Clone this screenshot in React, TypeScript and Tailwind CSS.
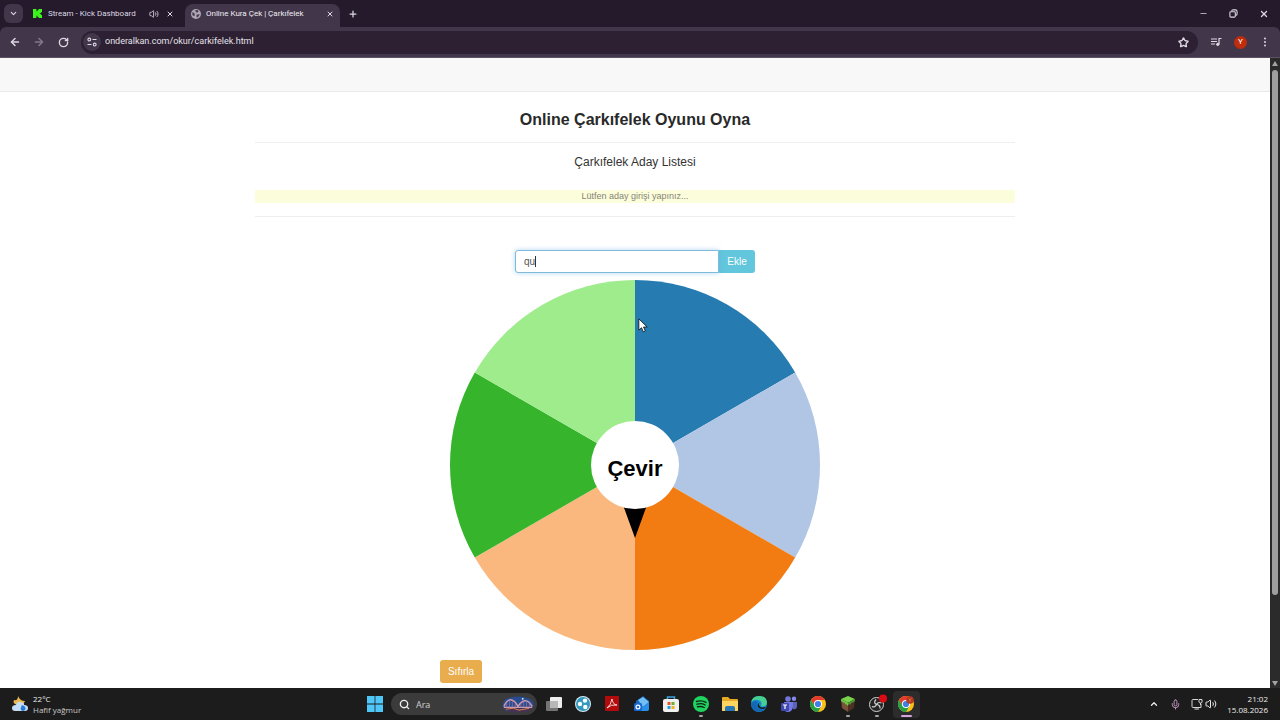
import { useState } from "react";
import type { ReactNode } from "react";
import { ArrowLeft, ArrowRight, ChevronDown, ChevronUp, Mic, Minus, Plus, RotateCw, Search, Star, Volume2, X } from "lucide-react";

const SLICES = [
  { name: "blue", color: "#267cb0" },
  { name: "light-blue", color: "#b0c6e4" },
  { name: "orange", color: "#f27c12" },
  { name: "peach", color: "#fab87e" },
  { name: "green", color: "#35b42c" },
  { name: "light-green", color: "#9fec8d" },
];

function slicePath(index: number, count: number, radius: number) {
  const point = (step: number) => {
    const angle = (step / count) * Math.PI * 2;
    return `${radius + Math.sin(angle) * radius} ${radius - Math.cos(angle) * radius}`;
  };
  return `M${radius} ${radius}L${point(index)}A${radius} ${radius} 0 0 1 ${point(index + 1)}Z`;
}

function Wheel() {
  return (
    <div className="relative mx-auto mt-[7px] size-[370px]">
      <svg viewBox="0 0 370 370" className="block size-full" aria-hidden="true">
        {SLICES.map((slice, index) => (
          <path key={slice.name} d={slicePath(index, SLICES.length, 185)} fill={slice.color} />
        ))}
        <path d="M173 225H197L185 258Z" fill="#000" />
      </svg>
      <button
        type="button"
        className="absolute inset-0 m-auto size-[88px] rounded-full bg-white pt-2 text-[22px] leading-6 font-bold text-black"
      >
        Çevir
      </button>
      <svg viewBox="0 0 12 18" className="pointer-events-none absolute top-[38px] left-[188px] h-[15px] w-[10px]" aria-hidden="true">
        <path d="M1 1V14.5L4.2 11.7L6.4 16.7L8.8 15.6L6.6 10.8H11Z" fill="#fff" stroke="#111" strokeWidth="1" />
      </svg>
    </div>
  );
}

function CandidateForm() {
  const [name, setName] = useState("qu");

  return (
    <form className="mx-auto mt-[33px] flex h-[23px] w-[240px]" onSubmit={(event) => event.preventDefault()}>
      <div className="relative flex min-w-0 flex-1">
        <input
          type="text"
          aria-label="Aday"
          value={name}
          onChange={(event) => setName(event.target.value)}
          className="min-w-0 flex-1 rounded-l-[3px] border border-[#7fbbd8] bg-white px-2 text-[10px] text-[#555] shadow-[0_0_5px_rgba(102,175,233,0.5)] outline-none"
        />
        <span className="pointer-events-none absolute top-[6px] left-5 h-[11px] w-px bg-[#333]" />
      </div>
      <button type="submit" className="w-9 rounded-r-[3px] bg-[#62c6dc] text-[10px] text-white">
        Ekle
      </button>
    </form>
  );
}

function KickLogo() {
  return (
    <svg viewBox="0 0 9 9" className="size-[9px] shrink-0" aria-hidden="true">
      <path d="M0 0H3.4V2.2H4.5V1.1H5.6V0H9V3.2H7.9V4.2H6.8V4.9H7.9V5.9H9V9H5.6V7.9H4.5V6.8H3.4V9H0Z" fill="#3bf51c" />
    </svg>
  );
}

function GlobeIcon() {
  return (
    <svg viewBox="0 0 16 16" className="size-[10px] shrink-0" aria-hidden="true">
      <circle cx="8" cy="8" r="8" fill="#aca5b3" />
      <path d="M2 5Q5 5 6 7.5T4.5 11.5Q1 9 2 5ZM7 1.5H11L12 4L9.5 6L7.5 4.5ZM9 9L13.5 8Q14 11 10.5 13.5L8.5 12Z" fill="#4b3f50" />
    </svg>
  );
}

function BrowserTabs() {
  return (
    <div className="flex h-[27px] items-center bg-[#241a2c] pl-1 text-[#ddd8e2]">
      <button type="button" aria-label="Search tabs" className="flex size-[19px] items-center justify-center rounded-md bg-[#42364a]">
        <ChevronDown size={9} strokeWidth={3} />
      </button>
      <div className="ml-[10px] flex h-full w-[141px] items-center text-[8px]">
        <KickLogo />
        <span className="ml-[6px] whitespace-nowrap">Stream - Kick Dashboard</span>
        <Volume2 size={10} className="ml-auto" />
        <button type="button" aria-label="Close Stream - Kick Dashboard" className="ml-[7px]">
          <X size={8} strokeWidth={3} />
        </button>
      </div>
      <div className="ml-[11px] flex h-[23px] w-[155px] items-center self-end rounded-t-lg bg-[#42364a] px-[6px] pb-1 text-[8px]">
        <GlobeIcon />
        <span className="ml-[5px] whitespace-nowrap text-[#f0edf2]">Online Kura Çek | Çarkıfelek</span>
        <button type="button" aria-label="Close Online Kura Çek" className="ml-auto">
          <X size={8} strokeWidth={3} />
        </button>
      </div>
      <button type="button" aria-label="New tab" className="ml-2">
        <Plus size={10} strokeWidth={3} />
      </button>
      <div className="mr-[11px] ml-auto flex items-center gap-[21px]">
        <button type="button" aria-label="Minimize">
          <Minus size={9} strokeWidth={2} />
        </button>
        <button type="button" aria-label="Restore">
          <svg viewBox="0 0 10 10" className="size-[9px]" fill="none" stroke="currentColor" strokeWidth="1.2" aria-hidden="true">
            <rect x="1" y="3" width="6" height="6" rx="1" />
            <path d="M3 2.5Q3 1 4.5 1H7Q9 1 9 3V5.5Q9 7 7.5 7" />
          </svg>
        </button>
        <button type="button" aria-label="Close window">
          <X size={10} strokeWidth={3} />
        </button>
      </div>
    </div>
  );
}

function Toolbar() {
  const [url, setUrl] = useState("onderalkan.com/okur/carkifelek.html");

  return (
    <div className="flex h-[31px] items-center rounded-t-md border-b border-[#5b5162] bg-[#42364a] pr-[11px] pl-[9px] text-[#ddd8e2]">
      <button type="button" aria-label="Back">
        <ArrowLeft size={12} strokeWidth={3} />
      </button>
      <button type="button" aria-label="Forward" className="ml-3 text-[#84798b]">
        <ArrowRight size={12} strokeWidth={3} />
      </button>
      <button type="button" aria-label="Reload" className="ml-[13px]">
        <RotateCw size={11} strokeWidth={3} />
      </button>
      <div className="ml-3 flex h-[23px] flex-1 items-center rounded-full bg-[#2c2032] px-[2px]">
        <button type="button" aria-label="Site information" className="flex size-[18px] items-center justify-center rounded-full bg-[#42364a]">
          <svg viewBox="0 0 10 10" className="size-[10px]" fill="none" stroke="currentColor" strokeWidth="1.1" aria-hidden="true">
            <circle cx="2.3" cy="2.5" r="1.4" />
            <circle cx="7.7" cy="7.5" r="1.4" />
            <path d="M5.5 2.5H9.5M0.5 7.5H4.5" />
          </svg>
        </button>
        <input
          type="text"
          aria-label="Address"
          value={url}
          onChange={(event) => setUrl(event.target.value)}
          className="ml-1 min-w-0 flex-1 bg-transparent text-[9px] text-[#e6e1e9] outline-none"
        />
        <button type="button" aria-label="Bookmark" className="mr-[7px]">
          <Star size={11} strokeWidth={3} />
        </button>
      </div>
      <button type="button" aria-label="Media controls" className="ml-3">
        <svg viewBox="0 0 12 10" className="h-[10px] w-3" aria-hidden="true">
          <path d="M1 2H7M1 4.5H7M1 7H5M9 7V1.5H11.5" fill="none" stroke="currentColor" strokeWidth="1.2" />
          <circle cx="7.8" cy="7.3" r="1.6" fill="currentColor" />
        </svg>
      </button>
      <button type="button" aria-label="Profile" className="ml-3 size-[13px] rounded-full bg-[#bf2d0d] text-[8px] leading-3 text-white">
        Y
      </button>
      <button type="button" aria-label="Menu" className="ml-[14px]">
        <svg viewBox="0 0 8 10" className="h-[10px] w-2" fill="currentColor" aria-hidden="true">
          <circle cx="4" cy="1.4" r="1" />
          <circle cx="4" cy="5" r="1" />
          <circle cx="4" cy="8.6" r="1" />
        </svg>
      </button>
    </div>
  );
}

function Scrollbar() {
  return (
    <div className="flex w-[10px] shrink-0 flex-col items-center bg-[#2b2b2b] pt-[3px] pb-[2px]">
      <svg viewBox="0 0 6 5" className="h-[5px] w-[6px] shrink-0" aria-hidden="true">
        <path d="M3 0L6 5H0Z" fill="#a3a3a3" />
      </svg>
      <div className="mt-1 h-[84%] w-[6px] rounded-full bg-[#9e9e9e]" />
      <svg viewBox="0 0 6 5" className="mt-auto h-[5px] w-[6px] shrink-0" aria-hidden="true">
        <path d="M0 0H6L3 5Z" fill="#a3a3a3" />
      </svg>
    </div>
  );
}

function WeatherIcon() {
  return (
    <svg viewBox="0 0 18 18" className="size-[18px]" aria-hidden="true">
      <path d="M7 1Q9 6 14 6Q12 11 7 10Q1 9 3 5Q7 6 7 1Z" fill="#edb54d" />
      <path d="M4 16Q1 16 1 13T5 10Q6 6 10 7T13 10Q17 10 17 13T14 16Z" fill="#c5dcf7" />
      <path d="M11 10Q16 12 14 15Q12 17 10 15Q9 14 11 10Z" fill="#267bd4" />
    </svg>
  );
}

function ChromeGlyph() {
  return (
    <>
      <circle cx="8" cy="8" r="8" fill="#fbc116" />
      <path d="M1.07 4A8 8 0 0 1 14.93 4H8L4.54 10Z" fill="#e33b2e" />
      <path d="M1.07 4L4.54 10L8 12L8 16A8 8 0 0 1 1.07 4Z" fill="#27a148" />
      <path d="M8 16L11.46 10L8 12L4.54 10Z" fill="#27a148" />
      <circle cx="8" cy="8" r="4" fill="#fff" />
      <circle cx="8" cy="8" r="3.1" fill="#3f80e8" />
    </>
  );
}

interface TaskbarApp {
  name: string;
  running?: boolean;
  active?: boolean;
  glyph: ReactNode;
}

const APPS: TaskbarApp[] = [
  {
    name: "Task view",
    glyph: (
      <>
        <rect x="0" y="5" width="12" height="10" rx="1" fill="#747474" />
        <rect x="4" y="1" width="12" height="11" rx="1" fill="#ededed" />
        <rect x="4" y="5" width="8" height="7" fill="#b8b8b8" />
      </>
    ),
  },
  {
    name: "Camera studio",
    glyph: (
      <>
        <circle cx="8" cy="8" r="8" fill="#dcecf2" />
        <circle cx="8" cy="8" r="7" fill="#3197bd" />
        <circle cx="5" cy="8" r="2.2" fill="#fff" />
        <circle cx="10" cy="4.6" r="2.2" fill="#fff" />
        <circle cx="10.3" cy="11" r="2.2" fill="#fff" />
      </>
    ),
  },
  {
    name: "Acrobat",
    glyph: (
      <>
        <rect x="1" y="0" width="14" height="15" rx="1" fill="#b30b0b" />
        <path d="M3 12Q7 9 8 3Q9 9 13 9Q7 8 3 12Z" fill="none" stroke="#fff" strokeWidth="0.8" />
      </>
    ),
  },
  {
    name: "Outlook",
    glyph: (
      <>
        <path d="M2 5L9 0L15 5V13L13 15H4L2 13Z" fill="#1763b8" />
        <path d="M4 4L9 1L15 6L9 11Z" fill="#74bff2" />
        <path d="M3 15L15 6V13Q15 15 13 15Z" fill="#2b90e8" />
        <rect x="0" y="7" width="8" height="8" rx="1.5" fill="#1769cf" />
        <circle cx="4" cy="11" r="1.9" fill="none" stroke="#fff" strokeWidth="1.2" />
      </>
    ),
  },
  {
    name: "Microsoft Store",
    glyph: (
      <>
        <path d="M4.5 5V1H11.5V5" fill="none" stroke="#3ba3da" strokeWidth="1.5" />
        <rect x="0" y="3" width="16" height="13" rx="2" fill="#f0f0f0" />
        <path d="M4.5 6H7.5V9H4.5Z" fill="#eb5427" />
        <path d="M8.5 6H11.5V9H8.5Z" fill="#71ad2c" />
        <path d="M4.5 10H7.5V13H4.5Z" fill="#299fdb" />
        <path d="M8.5 10H11.5V13H8.5Z" fill="#efb51d" />
      </>
    ),
  },
  {
    name: "Spotify",
    running: true,
    glyph: (
      <>
        <circle cx="8" cy="8" r="8" fill="#1ed45f" />
        <path d="M3.5 5.5Q8.5 3.8 13 6.4M4 8.2Q8.5 6.8 12.2 9M4.5 10.8Q8.2 9.8 11.3 11.5" fill="none" stroke="#16251b" strokeWidth="1.4" strokeLinecap="round" />
      </>
    ),
  },
  {
    name: "File Explorer",
    glyph: (
      <>
        <path d="M0 2Q0 1 1 1H6L8 3H15Q16 3 16 4V14Q16 15 15 15H1Q0 15 0 14Z" fill="#e6a923" />
        <path d="M0 5H16V14Q16 15 15 15H1Q0 15 0 14Z" fill="#fbd462" />
        <path d="M3 15V12Q3 10 5 10H11Q13 10 13 12V15Z" fill="#2878b7" />
      </>
    ),
  },
  {
    name: "Edge",
    glyph: (
      <>
        <circle cx="8" cy="8" r="8" fill="#168bd0" />
        <path d="M0 7Q1 0 8 0Q16 0 16 7Q15 11 10 10Q12 5 7 4Q2 3 0 7Z" fill="#45cf91" />
        <path d="M0 8Q3 3 7 6Q4 9 7 12Q10 14 14 13Q8 19 2 13Q0 11 0 8Z" fill="#1467b5" />
        <path d="M8.5 6.5Q7 9 9.5 11Q12 12 15 10.5L14 12.5Q9 14 7 11Q5.5 8 8.5 6.5Z" fill="#1c1c1c" />
      </>
    ),
  },
  {
    name: "Teams",
    glyph: (
      <>
        <circle cx="7" cy="3" r="2.8" fill="#7277dd" />
        <circle cx="13" cy="2.8" r="2.2" fill="#888bea" />
        <path d="M3 6H12V11Q11 16 7 16T3 12Z" fill="#7378e2" />
        <path d="M12 6H16V11Q15 14 12 13Z" fill="#5961bd" />
        <rect x="0" y="7" width="8" height="8" rx="1" fill="#4149ae" />
        <path d="M2 9H6M4 9V13" stroke="#fff" strokeWidth="1.2" />
      </>
    ),
  },
  { name: "Chrome", glyph: <ChromeGlyph /> },
  {
    name: "Minecraft",
    running: true,
    glyph: (
      <>
        <path d="M8 0L15 3L8 7L1 3Z" fill="#79d34c" />
        <path d="M1 3L8 7V16L2 12Z" fill="#79523a" />
        <path d="M15 3L8 7V16L14 12Z" fill="#4b3023" />
        <path d="M1 3L8 7V10L6 8V9L4 6V7L1 5Z" fill="#6ccc43" />
        <path d="M15 3L8 7V9L10 8V9L12 6V7L15 5Z" fill="#4b9a30" />
      </>
    ),
  },
  {
    name: "OBS Studio",
    running: true,
    glyph: (
      <>
        <circle cx="7.5" cy="8.5" r="7" fill="#252525" stroke="#d4d4d4" strokeWidth="1" />
        <path d="M7 3.5Q4 7 7.5 8.5Q11.5 9 11 12.5M12.5 7Q9 5.5 7.5 8.5Q6 12 3 10.5" fill="none" stroke="#d4d4d4" strokeWidth="1.2" />
        <circle cx="14" cy="2.5" r="4" fill="#dc0a12" />
      </>
    ),
  },
  {
    name: "Chrome profile",
    running: true,
    active: true,
    glyph: (
      <>
        <ChromeGlyph />
        <circle cx="12" cy="4" r="3.8" fill="#b7381e" />
        <path d="M10.8 2.5L12 4L13.2 2.5M12 4V6" fill="none" stroke="#dd8468" strokeWidth="0.7" />
      </>
    ),
  },
];

function AppButton({ app }: { app: TaskbarApp }) {
  return (
    <button
      type="button"
      aria-label={app.name}
      className={
        app.active
          ? "relative mx-auto flex h-[27px] w-[27px] items-center justify-center rounded-sm bg-[#2c2c2c]"
          : "relative mx-auto flex h-[27px] w-[27px] items-center justify-center"
      }
    >
      <svg viewBox="0 0 16 16" className="size-4 overflow-visible" aria-hidden="true">
        {app.glyph}
      </svg>
      {app.running ? (
        <span
          className={
            app.active
              ? "absolute bottom-[1px] h-[2px] w-[11px] rounded-full bg-[#d5a4da]"
              : "absolute bottom-[1px] h-[2px] w-1 rounded-full bg-[#a5a5a5]"
          }
        />
      ) : null}
    </button>
  );
}

function Taskbar() {
  return (
    <footer className="grid h-8 shrink-0 grid-cols-[1fr_auto_1fr] items-center bg-[#1c1c1c] text-[8px] leading-[11px] text-[#ededed]">
      <div className="flex items-center gap-1 pl-[11px]">
        <WeatherIcon />
        <div>
          <div>22°C</div>
          <div className="text-[#c8c8c8]">Hafif yağmur</div>
        </div>
      </div>
      <div className="flex items-center">
        <button type="button" aria-label="Start" className="flex w-8 justify-center">
          <svg viewBox="0 0 16 16" className="size-4" fill="#4ec6f7" aria-hidden="true">
            <path d="M0 0H7.6V7.6H0ZM8.4 0H16V7.6H8.4ZM0 8.4H7.6V16H0ZM8.4 8.4H16V16H8.4Z" />
          </svg>
        </button>
        <label className="flex h-[22px] w-[146px] items-center rounded-full bg-[#3b3b3b] pr-[2px] pl-2">
          <Search size={11} strokeWidth={3} />
          <input type="text" aria-label="Ara" placeholder="Ara" className="ml-[6px] min-w-0 flex-1 bg-transparent text-[9px] outline-none placeholder:text-[#d0d0d0]" />
          <svg viewBox="0 0 34 18" className="h-[17px] w-[34px]" aria-hidden="true">
            <path d="M5 3Q17 -2 29 3Q35 6 33 12Q28 18 17 17Q4 18 1 13Q0 6 5 3Z" fill="#294c91" />
            <path d="M1 12H33Q29 18 17 17Q4 18 1 12Z" fill="#493052" />
            <path d="M2 11Q9 -3 17 11Q25 -1 32 11M2 12H32" fill="none" stroke="#cc9db5" strokeWidth="1.5" />
            <path d="M5 8V12M8 5V12M11 5V12M14 8V12M20 8V12M23 6V12M26 6V12M29 8V12" stroke="#a97796" strokeWidth="0.7" />
            <path d="M4 14L12 13L18 15L29 13" fill="none" stroke="#d8874f" strokeWidth="1" />
            <circle cx="22" cy="3" r="1" fill="#e2f5ff" />
          </svg>
        </label>
        <div className="ml-[2px] grid w-[382px] grid-cols-13">
          {APPS.map((app) => (
            <AppButton key={app.name} app={app} />
          ))}
        </div>
      </div>
      <div className="flex items-center justify-end pr-3">
        <button type="button" aria-label="Show hidden icons">
          <ChevronUp size={10} strokeWidth={3} />
        </button>
        <Mic size={11} className="ml-[11px] text-[#c99bc5]" />
        <svg viewBox="0 0 12 12" className="ml-[10px] size-3" fill="none" stroke="#d7d7d7" aria-hidden="true">
          <path d="M7 1.5H2Q1 1.5 1 2.5V8.5Q1 9.5 2 9.5H10V6M3.5 11H8M8 1.5V4Q8 5 9.5 5T11 4V1.5ZM9.5 5V7" />
        </svg>
        <Volume2 size={12} strokeWidth={2} className="ml-[2px]" />
        <div className="ml-[10px] text-right">
          <div>21:02</div>
          <div>15.08.2026</div>
        </div>
      </div>
    </footer>
  );
}

export default function App() {
  return (
    <div className="flex h-screen min-h-[720px] flex-col bg-white font-['Open_Sans','Noto_Sans',sans-serif]">
      <header className="shrink-0 bg-[#241a2c] font-['Roboto',sans-serif]">
        <BrowserTabs />
        <Toolbar />
      </header>
      <div className="flex min-h-0 flex-1">
        <main className="min-w-0 flex-1 overflow-hidden font-['Liberation_Sans',Arial,sans-serif] text-[#333]">
          <nav className="h-[34px] border-b border-[#e9e9e9] bg-[#f8f8f8]" />
          <div className="mx-auto max-w-[760px] text-center">
            <h1 className="border-b border-[#eee] pt-4 pb-[10px] text-[16px] leading-6 font-bold text-[#292929]">Online Çarkıfelek Oyunu Oyna</h1>
            <h2 className="pt-[9px] text-[12px] leading-5">Çarkıfelek Aday Listesi</h2>
            <p className="mt-[18px] bg-[#fcfddb] text-[9px] leading-[13px] text-[#858577]">Lütfen aday girişi yapınız...</p>
            <hr className="mt-[13px] border-[#eee]" />
            <CandidateForm />
            <Wheel />
            <div className="mx-auto mt-[10px] flex w-[390px]">
              <button type="button" className="h-[23px] w-[42px] rounded-[3px] bg-[#e9ad4d] text-[10px] text-white">
                Sıfırla
              </button>
            </div>
          </div>
        </main>
        <Scrollbar />
      </div>
      <Taskbar />
    </div>
  );
}
